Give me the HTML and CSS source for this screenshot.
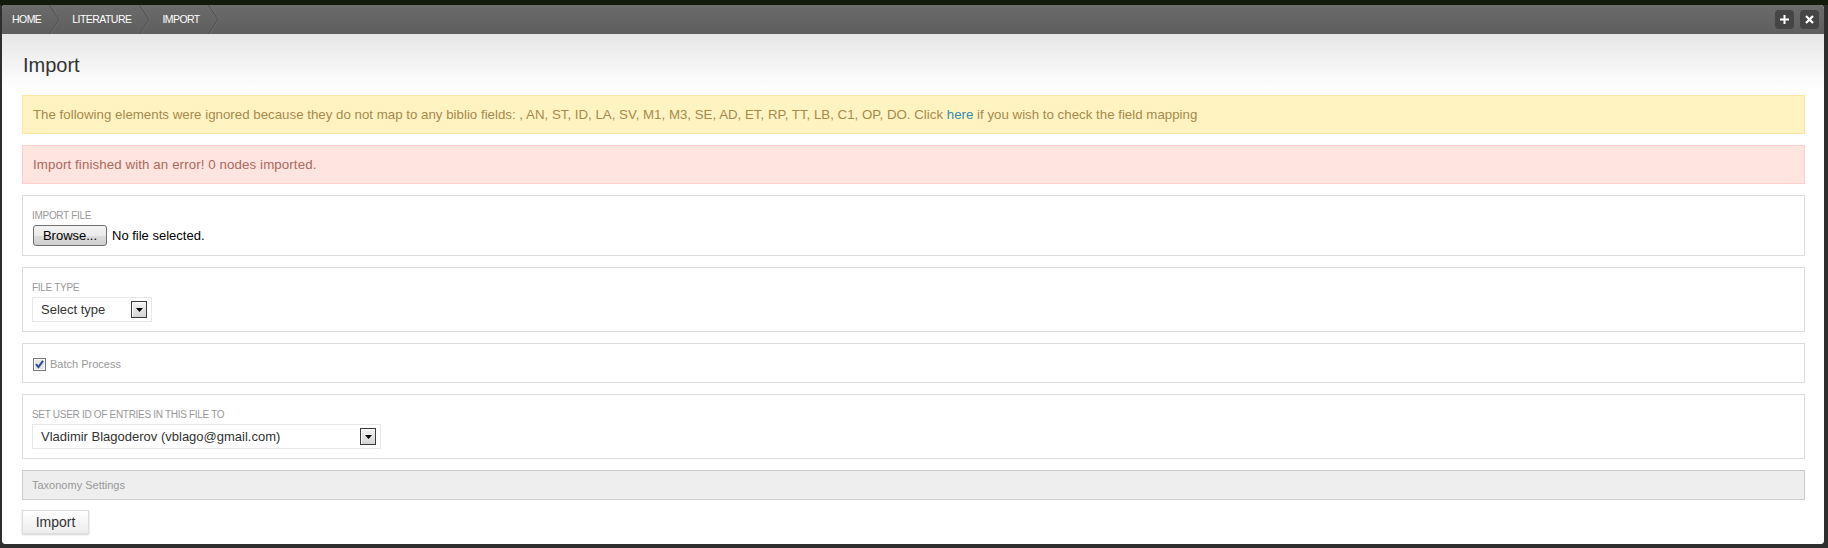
FILE: index.html
```html
<!DOCTYPE html>
<html>
<head>
<meta charset="utf-8">
<title>Import</title>
<link rel="stylesheet" href="styles.css">
</head>
<body>
<div class="window">
  <div class="header">
    <nav class="crumbs">
      <span class="crumb">HOME</span>
      <svg class="sep" width="11" height="29" viewBox="0 0 11 29"><polyline points="0.5,0 10,14.5 0.5,29" fill="none" stroke="#4f4f4f" stroke-width="1"/><polyline points="1.5,0 11,14.5 1.5,29" fill="none" stroke="#777" stroke-width="0.6"/></svg>
      <span class="crumb">LITERATURE</span>
      <svg class="sep" width="11" height="29" viewBox="0 0 11 29"><polyline points="0.5,0 10,14.5 0.5,29" fill="none" stroke="#4f4f4f" stroke-width="1"/><polyline points="1.5,0 11,14.5 1.5,29" fill="none" stroke="#777" stroke-width="0.6"/></svg>
      <span class="crumb">IMPORT</span>
      <svg class="sep" width="11" height="29" viewBox="0 0 11 29"><polyline points="0.5,0 10,14.5 0.5,29" fill="none" stroke="#4f4f4f" stroke-width="1"/><polyline points="1.5,0 11,14.5 1.5,29" fill="none" stroke="#777" stroke-width="0.6"/></svg>
    </nav>
    <div class="tools">
      <span class="tool"><svg width="9" height="9" viewBox="0 0 9 9"><rect x="3.5" y="0" width="2" height="9" fill="#fff"/><rect x="0" y="3.5" width="9" height="2" fill="#fff"/></svg></span>
      <span class="tool"><svg width="9" height="9" viewBox="0 0 9 9"><path d="M1 1 L8 8 M8 1 L1 8" stroke="#fff" stroke-width="2.2" fill="none"/></svg></span>
    </div>
  </div>
  <div class="content">
    <h1 class="title">Import</h1>
    <div class="alert warn">The following elements were ignored because they do not map to any biblio fields: , AN, ST, ID, LA, SV, M1, M3, SE, AD, ET, RP, TT, LB, C1, OP, DO. Click&nbsp;<a class="link" href="#">here</a>&nbsp;if you wish to check the field mapping</div>
    <div class="alert error">Import finished with an error! 0 nodes imported.</div>

    <div class="field field-file">
      <div class="label">Import file</div>
      <div class="file-row">
        <span class="browse">Browse...</span>
        <span class="nofile">No file selected.</span>
      </div>
    </div>

    <div class="field">
      <div class="label">File type</div>
      <div class="select select-small">
        <span class="select-text">Select type</span>
        <span class="arrow"><svg width="7" height="4" viewBox="0 0 7 4"><polygon points="0,0 7,0 3.5,4" fill="#000"/></svg></span>
      </div>
    </div>

    <div class="field field-batch">
      <span class="checkbox"><svg width="13" height="13" viewBox="0 0 13 13"><rect x="0.5" y="0.5" width="12" height="12" fill="#f2f2f2" stroke="#7a7a7a"/><rect x="1.5" y="1.5" width="10" height="10" fill="#e6e6e6" stroke="#fff" stroke-width="0.6"/><path d="M3 6.2 L5.4 9.2 L10 2.8" fill="none" stroke="#2b4a9c" stroke-width="2"/></svg></span>
      <span class="batch-text">Batch Process</span>
    </div>

    <div class="field">
      <div class="label">Set user ID of entries in this file to</div>
      <div class="select select-wide">
        <span class="select-text">Vladimir Blagoderov (vblago@gmail.com)</span>
        <span class="arrow"><svg width="7" height="4" viewBox="0 0 7 4"><polygon points="0,0 7,0 3.5,4" fill="#000"/></svg></span>
      </div>
    </div>

    <div class="fieldset-collapsed">Taxonomy Settings</div>

    <button class="submit" type="button">Import</button>
  </div>
</div>
</body>
</html>
```
FILE: styles.css
```css
html, body {
  margin: 0;
  padding: 0;
}
body {
  width: 1828px;
  height: 548px;
  overflow: hidden;
  background: linear-gradient(#111a0c 0, #111a0c 5px, #2e2e2e 5px);
  font-family: "Liberation Sans", Arial, sans-serif;
}
.window {
  margin: 5px 4px 0 2px;
  height: 539px;
  background: #fff;
  border-radius: 4px;
  overflow: hidden;
  display: flex;
  flex-direction: column;
}
.header {
  flex: none;
  height: 29px;
  background: linear-gradient(#6b6b6b, #5e5e5e);
  display: flex;
  align-items: center;
  justify-content: space-between;
  padding: 0 5px 0 10px;
}
.crumbs {
  display: flex;
  align-items: center;
  height: 29px;
}
.crumb {
  color: #fff;
  font-size: 10.5px;
  letter-spacing: -0.55px;
  line-height: 29px;
}
.sep {
  display: block;
  margin: 0 12px 0 8px;
}
.tools {
  display: flex;
  gap: 6px;
}
.tool {
  width: 19px;
  height: 19px;
  background: #454545;
  border-radius: 4px;
  display: flex;
  align-items: center;
  justify-content: center;
}
.tool svg {
  display: block;
}
.content {
  flex: 1;
  background: linear-gradient(#e6e6e6 0, #ffffff 55px);
  padding: 19px 19px 9px 20px;
}
.title {
  margin: 0 0 18px;
  padding-left: 1px;
  font-size: 20px;
  line-height: 24px;
  font-weight: normal;
  color: #333;
}
.alert {
  box-sizing: border-box;
  height: 39px;
  border: 1px solid;
  padding: 0 10px;
  display: flex;
  align-items: center;
  font-size: 13.3px;
  margin-bottom: 11px;
  white-space: nowrap;
}
.warn {
  background: #fff3c2;
  border-color: #fde5a3;
  color: #a9894c;
}
.error {
  background: #ffe4df;
  border-color: #fccfca;
  color: #ae685d;
  letter-spacing: 0.1px;
}
.link {
  color: #3a8aab;
  text-decoration: none;
}
.field {
  border: 1px solid #ddd;
  padding: 13px 9px 9px;
  margin-bottom: 11px;
}
.label {
  font-size: 10px;
  line-height: 14px;
  color: #999;
  text-transform: uppercase;
  letter-spacing: -0.3px;
  margin-bottom: 2px;
}
.file-row {
  display: flex;
  align-items: center;
  margin-top: 1px;
}
.browse {
  box-sizing: border-box;
  width: 74px;
  height: 21px;
  border: 1px solid #707070;
  border-radius: 3px;
  background: linear-gradient(#f3f3f3 0, #ebebeb 50%, #dddddd 50%, #cfcfcf 100%);
  font-size: 13px;
  color: #000;
  display: flex;
  align-items: center;
  justify-content: center;
  margin-left: 1px;
}
.nofile {
  font-size: 13px;
  color: #000;
  margin-left: 5px;
}
.select {
  box-sizing: border-box;
  height: 25px;
  border: 1px solid #e8e8e8;
  display: flex;
  align-items: center;
  justify-content: space-between;
  padding: 0 4px 0 8px;
}
.select-small {
  width: 120px;
}
.select-wide {
  width: 349px;
}
.select-text {
  font-size: 13px;
  color: #333;
}
.arrow {
  box-sizing: border-box;
  width: 16px;
  height: 17px;
  border: 1px solid #3a3a3a;
  background: linear-gradient(#f4f4f4, #d4d4d4);
  box-shadow: inset 1px 1px 0 #fff;
  display: flex;
  align-items: center;
  justify-content: center;
}
.arrow svg {
  display: block;
}
.field-batch {
  display: flex;
  align-items: center;
  padding: 14px 9px 11px 9px;
}
.checkbox {
  display: block;
  width: 13px;
  height: 13px;
  margin-left: 1px;
}
.checkbox svg {
  display: block;
}
.batch-text {
  font-size: 11px;
  color: #999;
  margin-left: 4px;
  line-height: 13px;
}
.fieldset-collapsed {
  box-sizing: border-box;
  height: 30px;
  border: 1px solid #cccccc;
  background: #eeeeee;
  padding-left: 9px;
  display: flex;
  align-items: center;
  font-size: 11px;
  color: #999;
  margin-bottom: 10px;
}
.submit {
  display: block;
  box-sizing: border-box;
  width: 67px;
  height: 24px;
  margin: 0;
  padding: 0;
  border: 1px solid #dddddd;
  border-radius: 0;
  background: linear-gradient(#ffffff, #ececec);
  box-shadow: 0 1px 2px rgba(0, 0, 0, 0.18);
  font-family: "Liberation Sans", Arial, sans-serif;
  font-size: 14px;
  color: #333;
}
```
